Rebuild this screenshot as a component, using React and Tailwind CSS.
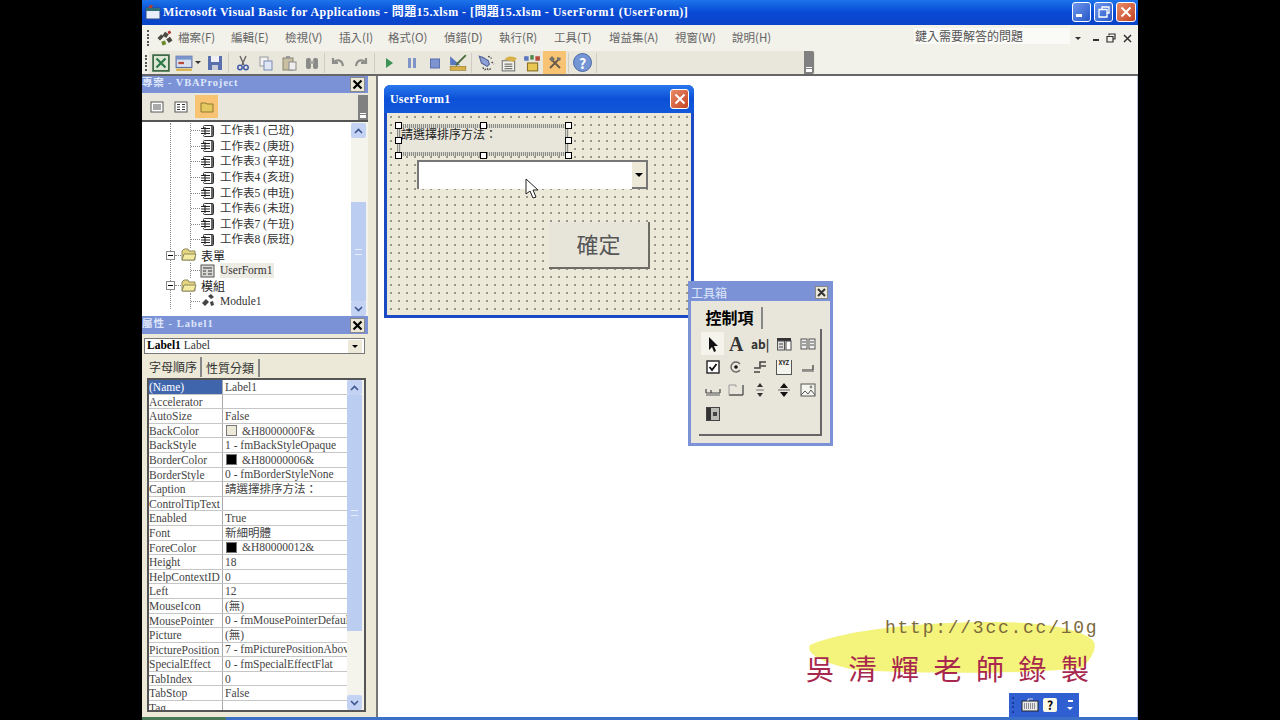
import React from "react";

const SERIF = "font-['Liberation_Serif','Noto_Sans_CJK_TC',serif]";
const SANS = "font-['Noto_Sans_CJK_TC','Liberation_Sans',sans-serif]";

const menus = [
  ["檔案(F)", 53],
  ["編輯(E)", 54],
  ["檢視(V)", 54],
  ["插入(I)", 49],
  ["格式(O)", 56],
  ["偵錯(D)", 55],
  ["執行(R)", 55],
  ["工具(T)", 55],
  ["增益集(A)", 66],
  ["視窗(W)", 57],
  ["說明(H)", 50],
];

const sheets = ["工作表1 (己班)", "工作表2 (庚班)", "工作表3 (辛班)", "工作表4 (亥班)", "工作表5 (申班)", "工作表6 (未班)", "工作表7 (午班)", "工作表8 (辰班)"];

const props = [
  ["(Name)", "Label1"],
  ["Accelerator", ""],
  ["AutoSize", "False"],
  ["BackColor", "&H8000000F&", "#ece9d8"],
  ["BackStyle", "1 - fmBackStyleOpaque"],
  ["BorderColor", "&H80000006&", "#000000"],
  ["BorderStyle", "0 - fmBorderStyleNone"],
  ["Caption", "請選擇排序方法："],
  ["ControlTipText", ""],
  ["Enabled", "True"],
  ["Font", "新細明體"],
  ["ForeColor", "&H80000012&", "#000000"],
  ["Height", "18"],
  ["HelpContextID", "0"],
  ["Left", "12"],
  ["MouseIcon", "(無)"],
  ["MousePointer", "0 - fmMousePointerDefaul"],
  ["Picture", "(無)"],
  ["PicturePosition", "7 - fmPicturePositionAbov"],
  ["SpecialEffect", "0 - fmSpecialEffectFlat"],
  ["TabIndex", "0"],
  ["TabStop", "False"],
  ["Tag", ""],
];

const Svg = ({ children, size = 16 }) => (
  <svg width={size} height={size} viewBox="0 0 16 16" className="shrink-0">
    {children}
  </svg>
);

const VbaIcon = () => (
  <Svg size={20}>
    <path d="M2 8l3-3 2 2-3 3zM8 3l3 2-2 3-3-2zM9 9l3-2 2 3-3 2z" fill="#4a4a42" />
    <path d="M5 11l3-1 1 3-3 1z" fill="#6a8a2a" />
    <path d="M10 3l2-1 1 2-2 1z" fill="#b03030" />
  </Svg>
);

const ExcelIcon = () => (
  <Svg size={18}>
    <rect x="1" y="1" width="14" height="14" fill="#dfe8d6" stroke="#3f6b48" strokeWidth="1.6" />
    <path d="M4 4l8 8M12 4l-8 8" stroke="#2c7a48" strokeWidth="2" />
  </Svg>
);

const FormIcon = () => (
  <Svg size={18}>
    <rect x="1" y="2" width="14" height="10" fill="#d8e0f0" stroke="#5a6ea8" />
    <rect x="1" y="2" width="14" height="3" fill="#7a94cc" />
    <rect x="3" y="7" width="5" height="2" fill="#b84a3a" />
    <rect x="1" y="13" width="14" height="2" fill="#d8b048" />
  </Svg>
);

const SaveIcon = () => (
  <Svg>
    <rect x="1" y="1" width="14" height="14" fill="#5a70ae" />
    <rect x="4" y="1" width="8" height="6" fill="#eef0f4" />
    <rect x="5" y="10" width="6" height="5" fill="#c8ccd8" />
  </Svg>
);

const CutIcon = () => (
  <Svg>
    <path d="M5 1l4 9M11 1L7 10" stroke="#666" strokeWidth="1.4" fill="none" />
    <circle cx="5" cy="12.5" r="2.2" fill="none" stroke="#3f5aa8" strokeWidth="1.5" />
    <circle cx="11" cy="12.5" r="2.2" fill="none" stroke="#3f5aa8" strokeWidth="1.5" />
  </Svg>
);

const CopyIcon = () => (
  <Svg>
    <rect x="2" y="2" width="8" height="9" fill="#f2f2ee" stroke="#9a9aa4" />
    <rect x="6" y="6" width="8" height="9" fill="#dfe6f4" stroke="#7a8ab8" />
  </Svg>
);

const PasteIcon = () => (
  <Svg>
    <rect x="2" y="3" width="10" height="12" fill="#c8c0a0" stroke="#8a8470" />
    <rect x="5" y="1" width="4" height="3" fill="#9a9a9a" />
    <rect x="8" y="7" width="7" height="8" fill="#eeeeee" stroke="#8a8a8a" />
  </Svg>
);

const FindIcon = () => (
  <Svg>
    <rect x="2" y="3" width="5" height="11" rx="2" fill="#8a8a88" />
    <rect x="9" y="3" width="5" height="11" rx="2" fill="#8a8a88" />
    <rect x="6" y="6" width="4" height="3" fill="#a8a8a4" />
  </Svg>
);

const UndoIcon = ({ flip }) => (
  <svg width="16" height="16" viewBox="0 0 16 16" className={flip ? "shrink-0 -scale-x-100" : "shrink-0"}>
    <path d="M3 3v5h5M3.5 8C6 4 12 4 13 11" fill="none" stroke="#8e8e8a" strokeWidth="2.2" />
  </svg>
);

const RunIcon = () => (
  <Svg>
    <path d="M5 3l7 5-7 5z" fill="#3f9258" />
  </Svg>
);

const PauseIcon = () => (
  <Svg>
    <rect x="4" y="3" width="3" height="10" fill="#8094c8" />
    <rect x="9" y="3" width="3" height="10" fill="#8094c8" />
  </Svg>
);

const StopIcon = () => (
  <Svg>
    <rect x="3.5" y="4" width="9" height="9" fill="#7e94d0" stroke="#5a6fae" />
  </Svg>
);

const DesignIcon = () => (
  <Svg size={18}>
    <path d="M1 2l9 8H1z" fill="#5a78c0" />
    <path d="M15 1L6 10" stroke="#4a6a3a" strokeWidth="1.6" />
    <rect x="1" y="11" width="14" height="3.5" fill="#d8b048" stroke="#8a7028" strokeWidth=".5" />
  </Svg>
);

const ExplorerIcon = () => (
  <Svg size={18}>
    <path d="M2 2l3 1 5 3 1 3-2 2-5-3z" fill="#8ea2d8" stroke="#55659a" />
    <path d="M5 12l2 2 2-1 1 1 3-1M10 2l3 2M13 7l2 2" stroke="#444" strokeWidth="1.2" strokeDasharray="1.5 1" fill="none" />
  </Svg>
);

const PropsIcon = () => (
  <Svg size={18}>
    <rect x="2" y="6" width="11" height="9" fill="#f4f4ee" stroke="#777" />
    <path d="M4 9h7M4 11h7M4 13h7" stroke="#777" />
    <path d="M4 5c3-4 8-3 11-1l-3 3z" fill="#d8b048" />
  </Svg>
);

const ObjectIcon = () => (
  <Svg size={18}>
    <rect x="4" y="8" width="9" height="7" fill="#e8c850" stroke="#8a7028" />
    <rect x="1" y="2" width="4" height="4" fill="#5a78c0" />
    <rect x="11" y="2" width="4" height="4" fill="#b84a3a" />
    <rect x="6.5" y="1" width="3" height="4" fill="#4a8a4a" />
  </Svg>
);

const ToolsIcon = () => (
  <Svg>
    <path d="M3 13L11 5M5 5l8 8" stroke="#6a5c48" strokeWidth="2" />
    <path d="M2 4l3-3 3 3-3 3zM10 2l4 1-1 3-3-1z" fill="#77736a" />
  </Svg>
);

const HelpIcon = () => (
  <div className={`flex h-[19px] w-[19px] items-center justify-center rounded-full border border-[#4a68a8] bg-[#7596d4] text-[14px] leading-none font-bold text-white ${SANS}`}>
    ?
  </div>
);

const Grip = () => (
  <div className="mx-[2px] flex h-[20px] flex-col justify-between py-[2px]">
    {[0, 1, 2, 3, 4].map((i) => (
      <div key={i} className="h-[2px] w-[2px] bg-[#555]" />
    ))}
  </div>
);

const Sep = ({ narrow }) => <div className={`${narrow ? "mx-[1px]" : "mx-[2px]"} h-[20px] w-px bg-[#cfcdc2]`} />;

const Tool = ({ children, w = "w-[23px]" }) => <div className={`flex h-[23px] ${w} shrink-0 items-center justify-center`}>{children}</div>;

const XpClose = ({ small }) => (
  <div className={`${small ? "h-[20px] w-[19px]" : "h-[20px] w-[20px]"} flex items-center justify-center rounded-[3px] border border-white bg-linear-to-br from-[#e88a68] to-[#c4431f]`}>
    <svg width="12" height="12" viewBox="0 0 12 12">
      <path d="M1.5 1.5l9 9M10.5 1.5l-9 9" stroke="#fff" strokeWidth="2" />
    </svg>
  </div>
);

const XpButton = ({ children }) => (
  <div className="flex h-[20px] w-[19px] items-center justify-center rounded-[3px] border border-white bg-linear-to-br from-[#6f96ec] to-[#2858c8]">{children}</div>
);

const DockClose = () => (
  <div className="flex h-[15px] w-[15px] items-center justify-center border border-[#888] bg-[#ece9d8]">
    <svg width="11" height="11" viewBox="0 0 11 11">
      <path d="M1.5 1.5l8 8M9.5 1.5l-8 8" stroke="#000" strokeWidth="2.2" />
    </svg>
  </div>
);

const ScrollBtn = ({ down }) => (
  <div className="flex h-[15px] w-[15px] shrink-0 items-center justify-center rounded-[2px] bg-[#c4d3f4]">
    <svg width="9" height="6" viewBox="0 0 9 6">
      <path d={down ? "M1 1l3.5 3.5L8 1" : "M1 5l3.5-3.5L8 5"} fill="none" stroke="#3c558e" strokeWidth="1.6" />
    </svg>
  </div>
);

const SheetIcon = () => (
  <Svg>
    <rect x="3.5" y="2.5" width="10" height="11" rx="1" fill="#fff" stroke="#333" />
    <path d="M1 5h9v7H1" fill="#fff" />
    <path d="M1 5.5h9M1 8h9M1 10.5h9M5 4v8" stroke="#222" strokeWidth="1.1" />
    <path d="M12 2.5v11" stroke="#222" strokeWidth="1.4" />
  </Svg>
);

const FolderIcon = () => (
  <Svg>
    <path d="M1 4l2-2h4l1 2h6v9H1z" fill="#e4d47c" stroke="#8e8a62" />
    <path d="M3 7h12l-2 6H1z" fill="#f4eaa0" stroke="#8e8a62" />
  </Svg>
);

const MinusBox = () => (
  <div className="-ml-[5px] flex h-[9px] w-[9px] shrink-0 items-center justify-center border border-[#888] bg-white">
    <div className="h-px w-[5px] bg-black" />
  </div>
);

const TreeRow = ({ icon, label, className = "", selected }) => (
  <div className="flex h-[15.6px] items-center">
    <div className="h-0 w-[9px] shrink-0 border-t border-dotted border-[#888]" />
    {icon}
    <span className={`ml-[4px] text-[11.5px] leading-[15px] whitespace-nowrap text-[#333] ${selected ? "bg-[#ecebe4] pr-[2px]" : ""} ${className}`}>{label}</span>
  </div>
);

const FolderRow = ({ label }) => (
  <div className="flex h-[15px] items-center">
    <MinusBox />
    <div className="h-0 w-[6px] shrink-0 border-t border-dotted border-[#888]" />
    <FolderIcon />
    <span className={`ml-[4px] text-[12px] leading-[15px] text-[#222] ${SANS}`}>{label}</span>
  </div>
);

// little icons in the toolbox palette
const toolboxIcons = [
  <svg key="a" width="14" height="16" viewBox="0 0 14 16"><path d="M3 1l9 9H8l2 5-2 1-2-5-3 3z" fill="#111" /></svg>,
  <span key="b" className={`text-[20px] leading-none font-bold text-[#333] ${SERIF}`}>A</span>,
  <span key="c" className={`text-[12px] leading-none font-bold text-[#333] ${SANS}`}>ab|</span>,
  <svg key="d" width="16" height="16" viewBox="0 0 16 16"><rect x="1" y="2" width="14" height="3" fill="#333" /><rect x="1.5" y="5" width="7" height="9" fill="#ddd" stroke="#555" /><rect x="10" y="5" width="5" height="9" fill="#fff" stroke="#444" /><path d="M3 8h4M3 11h4" stroke="#444" /></svg>,
  <svg key="e" width="16" height="16" viewBox="0 0 16 16"><rect x="1" y="3" width="6" height="10" fill="#eee" stroke="#555" /><rect x="9" y="3" width="6" height="10" fill="#eee" stroke="#555" /><path d="M2 6h4M2 9h4M10 6h4M10 9h4" stroke="#555" /></svg>,
  <svg key="f" width="14" height="14" viewBox="0 0 14 14"><rect x="1" y="1" width="12" height="12" fill="#fff" stroke="#222" strokeWidth="1.4" /><path d="M3.5 7l2.5 3 4.5-6" fill="none" stroke="#111" strokeWidth="1.8" /></svg>,
  <svg key="g" width="14" height="14" viewBox="0 0 14 14"><path d="M11 4a5 5 0 1 0 0 6" fill="none" stroke="#666" strokeWidth="1.4" /><circle cx="7" cy="7" r="1.8" fill="#111" /></svg>,
  <svg key="h" width="14" height="16" viewBox="0 0 14 16"><path d="M13 3H7v6H1M13 7H8M1 13h6" fill="none" stroke="#444" strokeWidth="1.6" /></svg>,
  <div key="i" className={`flex h-[15px] w-[16px] items-start justify-center border-x border-b border-[#555] bg-[#f4f4ee] text-[6px] leading-[6px] font-bold text-[#222] ${SANS}`}>XYZ</div>,
  <svg key="j" width="14" height="14" viewBox="0 0 14 14"><path d="M1 10h11V5" fill="none" stroke="#333" strokeWidth="1.2" /><path d="M1 11.5h12" stroke="#999" /></svg>,
  <svg key="k" width="16" height="14" viewBox="0 0 16 14"><path d="M1 10h14M6 7v3M1 6v4M15 6v4" stroke="#444" strokeWidth="1.2" /><path d="M1 12h14" stroke="#888" strokeWidth="1.5" /></svg>,
  <svg key="l" width="16" height="16" viewBox="0 0 16 16"><path d="M15 3v10M1 13h14" fill="none" stroke="#555" strokeWidth="1.4" /><path d="M1 3v10M1 3h7v2" fill="none" stroke="#999" /></svg>,
  <svg key="m" width="10" height="16" viewBox="0 0 10 16"><path d="M5 1l3 4H2zM5 15l3-4H2z" fill="#333" /><path d="M1 8h8" stroke="#777" /></svg>,
  <svg key="n" width="14" height="16" viewBox="0 0 14 16"><path d="M7 1l4 5H3zM7 15l4-5H3z" fill="#111" /><rect x="1" y="7.5" width="12" height="1" fill="#666" /></svg>,
  <svg key="o" width="16" height="16" viewBox="0 0 16 16"><rect x="1" y="2" width="14" height="12" fill="#f4f4ee" stroke="#555" /><path d="M1 13l4-4 3 3 3-4 4 5" fill="none" stroke="#555" /><circle cx="11" cy="5" r="1.4" fill="#888" /></svg>,
  <svg key="p" width="14" height="14" viewBox="0 0 14 14"><rect x="0.5" y="0.5" width="13" height="13" fill="#bcbcb6" stroke="#444" /><rect x="1" y="1" width="4" height="12" fill="#333" /><rect x="7" y="5" width="4" height="4" fill="#444" /></svg>,
];

const Handle = ({ className }) => <div className={`absolute h-[7px] w-[7px] border border-black bg-white ${className}`} />;

const ProjectPanel = () => (
  <div className="flex h-[240px] shrink-0 flex-col">
    <div className="flex h-[17px] items-center justify-between bg-[#7b93d6] pr-[3px]">
      <span className={`pb-[3px] text-[10.5px] leading-none font-bold tracking-[0.8px] text-[#dfe6fa] ${SERIF}`}>專案 - VBAProject</span>
      <DockClose />
    </div>
    <div className="flex h-[27px] items-center gap-[5px] bg-[#e9e7dc] pl-[5px]">
      <Tool w="w-[19px]">
        <svg width="14" height="14" viewBox="0 0 14 14"><rect x="1" y="2" width="12" height="10" fill="#fff" stroke="#555" /><path d="M3 5h8M3 7h8M3 9h8" stroke="#555" /></svg>
      </Tool>
      <Tool w="w-[19px]">
        <svg width="14" height="14" viewBox="0 0 14 14"><rect x="1" y="2" width="12" height="10" fill="#fff" stroke="#555" /><path d="M3 4.5h3M8 4.5h3M3 7h3M8 7h3M3 9.5h3M8 9.5h3" stroke="#333" /></svg>
      </Tool>
      <div className="flex h-[23px] w-[23px] items-center justify-center bg-[#f8c474]">
        <svg width="14" height="12" viewBox="0 0 14 12"><path d="M1 2h5l1 1h6v8H1z" fill="#e6c860" stroke="#8c7a30" /></svg>
      </div>
      <div className="mt-auto ml-auto flex h-[25px] w-[10px] flex-col justify-end bg-[#808080] pb-[2px]">
        <div className="mx-auto h-px w-[6px] bg-white" />
        <div className="mx-auto mt-px h-[3px] w-[6px] bg-white" />
      </div>
    </div>
    <div className="flex min-h-0 flex-1 border-t-2 border-[#555] bg-white">
      <div className={`min-w-0 flex-1 overflow-hidden pt-[1px] pl-[28px] ${SERIF}`}>
        <div className="border-l border-dotted border-[#888]">
          <div className="ml-[19px] border-l border-dotted border-[#888]">
            {sheets.map((s) => (
              <TreeRow key={s} icon={<SheetIcon />} label={s} />
            ))}
          </div>
          <FolderRow label="表單" />
          <div className="ml-[19px] border-l border-dotted border-[#888]">
            <TreeRow icon={<Svg><rect x="1" y="2" width="13" height="12" fill="#d8d8d4" stroke="#555" /><path d="M3 5h9M3 8h3M8 8h4M3 11h3M8 11h4" stroke="#333" /></Svg>} label="UserForm1" selected />
          </div>
          <FolderRow label="模組" />
          <div className="ml-[19px] border-l border-dotted border-[#888]">
            <TreeRow icon={<Svg><path d="M2 10l4-4 3 3-4 4zM8 3l3-2 3 3-3 2zM10 9l3-1 1 4-3 1z" fill="#444" /></Svg>} label="Module1" />
          </div>
        </div>
      </div>
      <div className="flex w-[17px] shrink-0 flex-col bg-[#f4f3ec] pt-[1px]">
        <ScrollBtn />
        <div className="mt-[64px] flex w-[15px] flex-1 items-center justify-center bg-[#bccdf2]">
          <div className="h-[6px] w-[7px] border-y border-[#e8eefc]" />
        </div>
        <ScrollBtn down />
      </div>
    </div>
  </div>
);

const PropsPanel = () => (
  <div className="flex min-h-0 flex-1 flex-col">
    <div className="flex h-[18px] shrink-0 items-center justify-between bg-[#7b93d6] pr-[3px]">
      <span className={`pb-[2px] text-[10.5px] leading-none font-bold tracking-[1px] text-[#dfe6fa] ${SERIF}`}>屬性 - Label1</span>
      <DockClose />
    </div>
    <div className={`mt-[4px] mr-[3px] ml-[2px] flex h-[16px] shrink-0 items-center justify-between border border-[#777] bg-white px-[2px] text-[11.5px] text-[#333] ${SERIF}`}>
      <span><b className="text-black">Label1</b> Label</span>
      <div className="flex h-[13px] w-[14px] items-center justify-center bg-[#ece9d8]">
        <div className="h-0 w-0 border-x-[3px] border-t-[3px] border-x-transparent border-t-black" />
      </div>
    </div>
    <div className={`mt-[3px] mb-[1px] flex h-[20px] shrink-0 items-end pl-[4px] text-[12px] leading-none text-[#333] ${SANS}`}>
      <div className="flex h-[20px] w-[56px] items-center justify-center border-r-2 border-[#888]">字母順序</div>
      <div className="flex h-[18px] w-[58px] items-center justify-center border-r-2 border-[#888]">性質分類</div>
    </div>
    <div className="mr-[2px] mb-[5px] ml-[5px] flex min-h-0 flex-1 border-2 border-[#555] bg-white">
      <div className={`min-w-0 flex-1 overflow-hidden text-[11.5px] leading-[14px] text-[#444] ${SERIF}`}>
        {props.map(([name, value, swatch], i) => (
          <div key={name} className="flex h-[14.6px] border-b border-[#c6c6c6]">
            <div className={`w-[74px] shrink-0 overflow-hidden border-r border-[#aaa] whitespace-nowrap ${i === 0 ? "bg-[#3f66ad] text-white" : ""}`}>{name}</div>
            <div className="flex min-w-0 flex-1 items-center overflow-hidden pl-[2px] whitespace-nowrap">
              {swatch && <span className="mr-[5px] ml-[1px] h-[11px] w-[11px] shrink-0 border border-[#777]" style={{ backgroundColor: swatch }} />}
              {value}
            </div>
          </div>
        ))}
      </div>
      <div className="flex w-[17px] shrink-0 flex-col bg-[#f4f3ec] pr-[2px]">
        <ScrollBtn />
        <div className="flex h-[236px] w-[15px] items-center justify-center bg-[#bccdf2]">
          <div className="h-[6px] w-[7px] border-y border-[#e8eefc]" />
        </div>
        <div className="flex-1" />
        <ScrollBtn down />
      </div>
    </div>
  </div>
);

const FormWindow = () => (
  <div className="absolute top-[9px] left-[6px] flex h-[233px] w-[310px] flex-col rounded-t-[6px] bg-[#1a4bc4]">
    <div className="flex h-[28px] shrink-0 items-center justify-between rounded-t-[6px] bg-linear-to-b from-[#2a78ec] via-[#0c50d8] to-[#1358d8] pr-[5px] pl-[6px]">
      <span className={`text-[12px] font-bold tracking-[0.2px] text-white ${SERIF}`}>UserForm1</span>
      <XpClose small />
    </div>
    <div className="relative mx-[3px] mb-[3px] flex-1 bg-[#ece9d8] bg-[radial-gradient(#333_0.6px,transparent_0.8px)] bg-size-[8px_8px]">
      {/* selected label */}
      <div className="absolute top-[11px] left-[10px] h-[32px] w-[172px] bg-[repeating-linear-gradient(90deg,#8e8e88_0,#8e8e88_1px,#d8d8ce_1px,#d8d8ce_2px)] p-[4px]">
        <div className="h-full w-full bg-[#e8e6da]" />
        <span className={`absolute top-[2px] left-[4px] text-[12px] leading-[16px] whitespace-nowrap text-[#222] ${SANS}`}>請選擇排序方法：</span>
      </div>
      <Handle className="top-[9px] left-[8px]" />
      <Handle className="top-[9px] left-[93px]" />
      <Handle className="top-[9px] left-[178px]" />
      <Handle className="top-[24px] left-[8px]" />
      <Handle className="top-[24px] left-[178px]" />
      <Handle className="top-[39px] left-[8px]" />
      <Handle className="top-[39px] left-[93px]" />
      <Handle className="top-[39px] left-[178px]" />
      {/* combo */}
      <div className="absolute top-[47px] left-[30px] flex h-[29px] w-[231px] border-t-2 border-l-2 border-[#777] bg-white">
        <div className="flex-1" />
        <div className="flex w-[16px] items-center justify-center border-r-2 border-b-2 border-[#777] bg-[#ece9d8]">
          <div className="h-0 w-0 border-x-[4px] border-t-[4px] border-x-transparent border-t-black" />
        </div>
      </div>
      {/* mouse pointer */}
      <svg width="14" height="21" viewBox="0 0 14 21" className="absolute top-[65px] left-[138px]">
        <path d="M1 1v15l4-3 3 7 3-1-3-7h5z" fill="#fff" stroke="#222" strokeWidth="1" />
      </svg>
      {/* button */}
      <div className={`absolute top-[109px] left-[162px] flex h-[47px] w-[101px] items-center justify-center border-r-2 border-b-2 border-[#6c6c64] bg-[#e7e5da] pb-[3px] text-[22px] leading-none text-[#555] ${SANS}`}>確定</div>
    </div>
  </div>
);

const Toolbox = () => (
  <div className="absolute top-[205px] left-[310px] flex h-[165px] w-[145px] flex-col border-[3px] border-[#7b93d6] bg-[#e8e6da]">
    <div className="flex h-[17px] shrink-0 items-center justify-between bg-[#7b93d6] pr-[2px]">
      <span className={`text-[12px] leading-none text-[#dfe6fa] ${SANS}`}>工具箱</span>
      <div className="flex h-[13px] w-[13px] items-center justify-center border border-[#888] bg-[#ece9d8]">
        <svg width="9" height="9" viewBox="0 0 9 9"><path d="M1 1l7 7M8 1L1 8" stroke="#333" strokeWidth="2" /></svg>
      </div>
    </div>
    <div className="flex h-[28px] shrink-0 items-end pl-[7px]">
      <div className={`flex h-[22px] w-[65px] items-center justify-center border-r-2 border-[#888] pb-[2px] text-[16px] leading-none font-bold text-black ${SANS}`}>控制項</div>
    </div>
    <div className="mx-[8px] grid h-[107px] grid-cols-5 content-start border-r-2 border-b-2 border-[#666] pt-[3px] pl-[2px]">
      {toolboxIcons.map((icon, i) => (
        <div key={i} className={`flex h-[23.4px] w-[23px] items-center justify-center ${i === 0 ? "bg-[#f4f3ec]" : ""}`}>
          {icon}
        </div>
      ))}
    </div>
  </div>
);

const Watermark = () => (
  <div className="absolute top-[537px] left-[428px] h-[74px] w-[296px]">
    <svg width="296" height="74" viewBox="0 0 296 74" className="absolute inset-0">
      <path d="M4 32C40 16 120 9 190 9c50 0 90 8 98 20 3 8-4 18-12 26-60 6-150 6-226 2C24 52-2 42 4 32z" fill="#f4f47c" />
    </svg>
    <span className="absolute top-[3px] left-[79px] font-['Liberation_Mono',monospace] text-[18px] leading-[24px] tracking-[1.75px] whitespace-nowrap text-[#7d6a3c]">http://3cc.cc/10g</span>
    <span className={`absolute top-[37px] left-[0px] text-[28px] leading-[36px] tracking-[14.5px] whitespace-nowrap text-[#a8274e] ${SANS}`}>吳清輝老師錄製</span>
  </div>
);

const LangBar = () => (
  <div className="absolute top-[617px] left-[631px] flex h-[24px] w-[70px] items-center bg-[#2f5fd0] pl-[3px]">
    <div className="flex h-[16px] flex-col justify-between">
      {[0, 1, 2, 3].map((i) => (
        <div key={i} className="h-[2px] w-[2px] bg-[#1c3c9c]" />
      ))}
    </div>
    <svg width="18" height="14" viewBox="0 0 18 14" className="ml-[7px]">
      <rect x="1" y="3" width="16" height="10" fill="#e8e8e8" stroke="#223" />
      <path d="M3 6h12M3 8h12M3 10h12" stroke="#334" strokeDasharray="1 1" />
      <path d="M7 3V1h5" fill="none" stroke="#ddd" />
    </svg>
    <div className={`ml-[4px] flex h-[14px] w-[14px] items-center justify-center rounded-[2px] bg-[#fbfbe8] text-[12px] leading-none font-bold text-black ${SANS}`}>?</div>
    <div className="ml-[10px] flex flex-col items-center gap-[5px]">
      <div className="h-[2px] w-[5px] bg-white" />
      <div className="h-0 w-0 border-x-[3px] border-t-[3px] border-x-transparent border-t-white" />
    </div>
  </div>
);

export default function App() {
  return (
    <div className="flex h-[720px] w-[1280px] justify-center overflow-hidden bg-black">
      <div className="flex h-[720px] w-[996px] shrink-0 flex-col bg-[#ece9d8]">
        {/* title bar */}
        <div className="flex h-[25px] shrink-0 items-center justify-between bg-linear-to-b from-[#1d74ea] via-[#0a49d4] to-[#0a44c8] pr-[2px] pb-[2px] pl-[3px]">
          <div className="flex items-center gap-[2px]">
            <Svg>
              <rect x="1" y="4" width="14" height="11" fill="#e8eefa" stroke="#2a4a8a" />
              <rect x="1" y="4" width="14" height="3" fill="#2f6f7a" />
              <path d="M3 4l2-3h3l-1 3z" fill="#b04030" />
            </Svg>
            <span className={`text-[12px] leading-none font-bold tracking-[0.44px] whitespace-nowrap text-white ${SERIF}`}>Microsoft Visual Basic for Applications - 問題15.xlsm - [問題15.xlsm - UserForm1 (UserForm)]</span>
          </div>
          <div className="flex items-center gap-[3px]">
            <XpButton><div className="mt-[8px] mr-[6px] h-[3px] w-[6px] bg-white" /></XpButton>
            <XpButton>
              <svg width="12" height="12" viewBox="0 0 12 12"><path d="M4 3V1h7v6H9M1 3.5h8V11H1z" fill="none" stroke="#fff" strokeWidth="1.3" /></svg>
            </XpButton>
            <XpClose />
          </div>
        </div>

        {/* menu bar */}
        <div className="flex h-[26px] shrink-0 items-center bg-[#f2f1ea] pl-[3px]">
          <Grip />
          <div className="flex w-[27px] justify-center"><VbaIcon /></div>
          <div className={`flex text-[11.5px] leading-none whitespace-nowrap text-[#666] ${SANS}`}>
            {menus.map(([label, w]) => (
              <div key={label} className="shrink-0" style={{ width: w }}>{label}</div>
            ))}
          </div>
          <div className="ml-auto flex items-center pr-[6px]">
            <div className={`mb-[5px] flex h-[16px] w-[156px] items-center bg-[#fafaf7] pl-[1px] text-[12px] leading-none text-[#555] ${SANS}`}>鍵入需要解答的問題</div>
            <div className="ml-[5px] h-0 w-0 border-x-[3px] border-t-[3px] border-x-transparent border-t-[#333]" />
            <span className="mt-[3px] ml-[12px] h-[2px] w-[6px] bg-[#333]" />
            <svg width="10" height="10" viewBox="0 0 10 10" className="ml-[7px]"><path d="M3 2.5V1h6v5H7.5M1 3.5h6V9H1z" fill="none" stroke="#333" strokeWidth="1.2" /></svg>
            <svg width="9" height="9" viewBox="0 0 9 9" className="ml-[7px]"><path d="M1 1l7 7M8 1L1 8" stroke="#333" strokeWidth="1.5" /></svg>
          </div>
        </div>

        {/* standard toolbar */}
        <div className="flex h-[25px] shrink-0 items-center border-b-2 border-[#666] bg-[#f2f1ea] pl-[1px]">
          <Grip />
          <div className="flex h-[23px] items-center bg-[#e9e7dc] pr-[1px]">
            <Tool><ExcelIcon /></Tool>
            <Tool><FormIcon /></Tool>
            <div className="mr-[2px] h-0 w-0 border-x-[3px] border-t-[3px] border-x-transparent border-t-[#333]" />
            <Tool><SaveIcon /></Tool>
            <Sep />
            <Tool><CutIcon /></Tool>
            <Tool><CopyIcon /></Tool>
            <Tool><PasteIcon /></Tool>
            <Tool><FindIcon /></Tool>
            <Sep narrow />
            <Tool><UndoIcon /></Tool>
            <Tool><UndoIcon flip /></Tool>
            <Sep />
            <Tool><RunIcon /></Tool>
            <Tool><PauseIcon /></Tool>
            <Tool><StopIcon /></Tool>
            <Tool><DesignIcon /></Tool>
            <Sep />
            <Tool><ExplorerIcon /></Tool>
            <Tool><PropsIcon /></Tool>
            <Tool><ObjectIcon /></Tool>
            <Tool><div className="flex h-[23px] w-[23px] items-center justify-center bg-[#f8c474]"><ToolsIcon /></div></Tool>
            <Sep />
            <Tool><HelpIcon /></Tool>
            <Sep />
            <div className="w-[205px]" />
            <div className="flex h-[23px] w-[10px] flex-col justify-end rounded-r-[2px] bg-[#808080] pb-[2px]">
              <div className="mx-auto h-px w-[6px] bg-white" />
              <div className="mx-auto mt-px h-[3px] w-[6px] bg-white" />
            </div>
          </div>
        </div>

        {/* main area */}
        <div className="flex min-h-0 flex-1">
          <div className="flex w-[226px] shrink-0 flex-col">
            <ProjectPanel />
            <PropsPanel />
          </div>
          <div className="w-[8px] shrink-0" />
          <div className="relative min-w-0 flex-1 border-r border-r-[#b8c4e0] border-l-2 border-l-[#777] bg-white">
            <FormWindow />
            <Toolbox />
            <Watermark />
            <LangBar />
          </div>
        </div>

        {/* taskbar sliver */}
        <div className="flex h-[3px] shrink-0">
          <div className="w-[84px] bg-[#4a7a5a]" />
          <div className="flex-1 bg-[#3a70c8]" />
        </div>
      </div>
    </div>
  );
}
